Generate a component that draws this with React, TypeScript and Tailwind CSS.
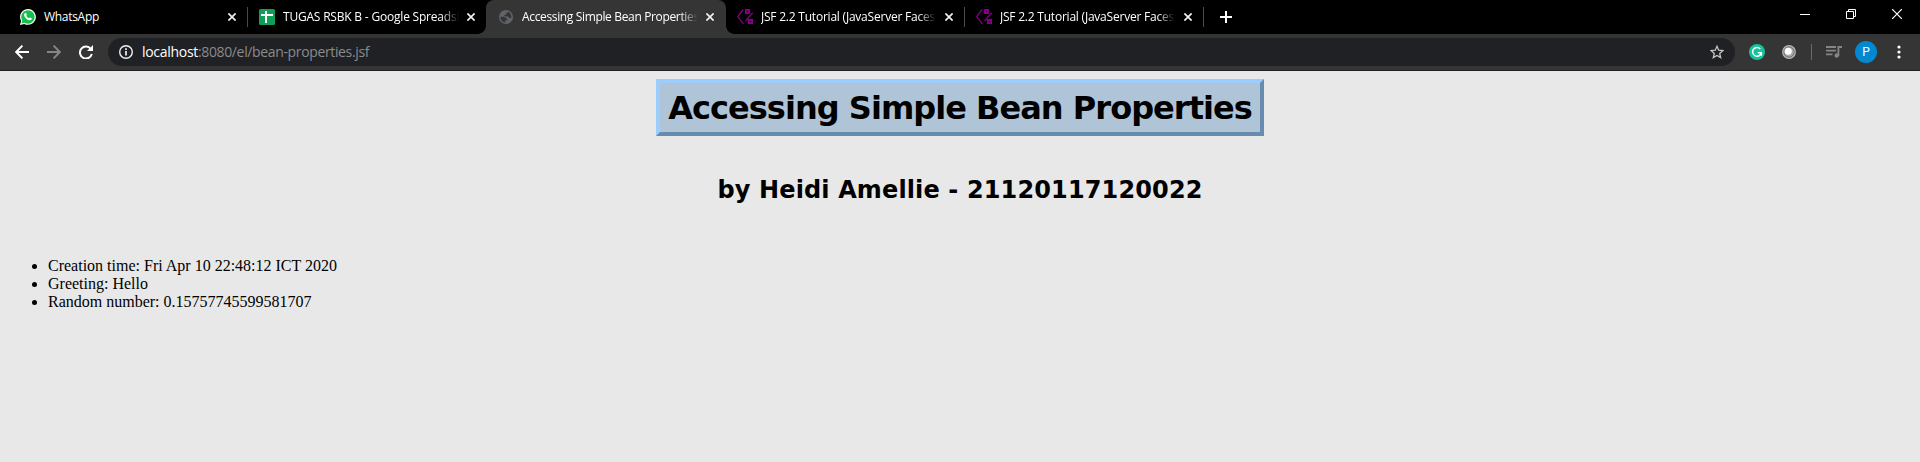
import React from "react";

const Close = ({ className = "" }: { className?: string }) => (
  <svg className={"h-2 w-2 shrink-0 " + className} viewBox="0 0 8 8" stroke="#f1f1f1" strokeWidth="1.7">
    <path d="M.4.4l7.2 7.2M7.6.4L.4 7.6" />
  </svg>
);

const WhatsApp = () => (
  <svg className="h-4 w-4 shrink-0" viewBox="0 0 16 16">
    <path d="M0 16l1.1-4.1A7.9 7.9 0 1 1 4.200 14.9z" fill="#fff" />
    <path d="M1.500 14.500l.8-2.900A6.700 6.700 0 1 1 4.500 13.700z" fill="#12c04a" />
    <path d="M5.300 4.100c.5-.2.8 0 1 .5l.5 1.100c.1.300-.2.700-.6 1.100.6 1.200 1.500 2 2.800 2.500.5-.6.8-1 1.100-.8l1.500.8c.4.200.2.900-.1 1.300-.8.900-2 .9-3.200.4C6.400 10.200 5 8.800 4.300 7c-.5-1.200-.1-2.300 1-2.900z" fill="#fff" />
  </svg>
);

const Sheets = () => (
  <svg className="h-4 w-4 shrink-0" viewBox="0 0 16 16">
    <rect width="16" height="16" rx="1.500" fill="#0f9d58" />
    <path d="M2 5h12v2H8v7H6V7H2zM6 2h2v3H6z" fill="#fff" />
  </svg>
);

const Globe = () => (
  <svg className="h-3.5 w-3.5 shrink-0" viewBox="0 0 14 14">
    <circle cx="7" cy="7" r="7" fill="#5f6368" />
    <path d="M1.500 6.800h3.300c1.400 0 2.100.8 2.100 1.800h1.300v1.600H6.400v2.200C3.500 12.300 1.400 9.800 1.500 6.800zM8.800 1.700c0 1.300-.7 1.700-1.900 1.700v1.500H5.300c.1 1.100.9 1.500 2 1.500h2.300c0 1.500.8 1.700 2.700 1.500.4-2.700-1-5.300-3.500-6.200z" fill="#353535" />
  </svg>
);

const Jsf = () => (
  <svg className="h-4 w-4 shrink-0" viewBox="0 0 16 16" fill="none" stroke="#850085">
    <path d="M6.300.3L.8 7.600l5.500 7.200M15.800 3.800l-7.200 8" strokeWidth="1.300" />
    <path d="M8.900.9h3.200v3.200H8.900zM11.900 10.900h3.200v3.200h-3.200z" strokeWidth="2" />
  </svg>
);

const Title = ({ children, width }: { children: React.ReactNode; width: string }) => (
  <span className={"shrink-0 overflow-hidden whitespace-nowrap text-xs leading-4 text-white [mask-image:linear-gradient(to_right,#000_calc(100%-18px),transparent)] " + width}>
    {children}
  </span>
);

export default function App() {
  return (
    <div className="flex h-[462px] w-[1920px] flex-col overflow-hidden bg-[#e8e8e8] font-['Open_Sans','Noto_Sans',sans-serif]">
      <header className="flex h-[34px] shrink-0 bg-black">
        <div className="flex w-[247px] items-center pl-5">
          <WhatsApp />
          <span className="ml-2 w-[184px] text-xs leading-4 tracking-[-0.3px] text-white">WhatsApp</span>
          <Close />
        </div>
        <div className="my-[7px] w-px bg-[#48484a]" />
        <div className="flex w-[238px] items-center pl-[11px]">
          <Sheets />
          <div className="ml-2 flex tracking-[-0.2px]"><Title width="w-[176px]">TUGAS RSBK B - Google Spreadsh</Title></div>
          <Close className="ml-2" />
        </div>
        <div className="relative flex w-[240px] items-center rounded-t-[8px] bg-[#353535] pl-[13px]">
          <i className="absolute bottom-0 -left-2 h-2 w-2 bg-[radial-gradient(circle_at_0_0,#000_7.5px,#353535_8px)]" />
          <i className="absolute -right-2 bottom-0 h-2 w-2 bg-[radial-gradient(circle_at_100%_0,#000_7.5px,#353535_8px)]" />
          <Globe />
          <div className="ml-[9px] flex tracking-[-0.35px]"><Title width="w-[176px]">Accessing Simple Bean Properties</Title></div>
          <Close className="ml-2" />
        </div>
        <div className="flex w-[238px] items-center pl-[11px]">
          <Jsf />
          <div className="ml-2 flex tracking-[-0.22px]"><Title width="w-[175px]">JSF 2.2 Tutorial (JavaServer Faces</Title></div>
          <Close className="ml-[9px]" />
        </div>
        <div className="my-[7px] w-px bg-[#48484a]" />
        <div className="flex w-[238px] items-center pl-[11px]">
          <Jsf />
          <div className="ml-2 flex tracking-[-0.22px]"><Title width="w-[175px]">JSF 2.2 Tutorial (JavaServer Faces</Title></div>
          <Close className="ml-[9px]" />
        </div>
        <div className="my-[7px] w-px bg-[#48484a]" />
        <svg className="mt-[11px] ml-4 h-3 w-3" viewBox="0 0 12 12" stroke="#fff" strokeWidth="2"><path d="M6 0v12M0 6h12" /></svg>
        <div className="mt-[9px] mr-[18px] ml-auto flex h-[10px] gap-9 text-white">
          <svg className="h-[10px] w-[10px]" viewBox="0 0 10 10" stroke="currentColor"><path d="M0 5.500h10" /></svg>
          <svg className="h-[10px] w-[10px]" viewBox="0 0 10 10" fill="none" stroke="currentColor"><path d="M.5 2.500h7v7h-7zM2.500 2.500v-2h7v7h-2" /></svg>
          <svg className="h-[10px] w-[10px]" viewBox="0 0 10 10" stroke="currentColor" strokeWidth="1.200"><path d="M0 0l10 10M10 0L0 10" /></svg>
        </div>
      </header>

      <nav className="flex h-[37px] shrink-0 items-center border-b border-[#241f24] bg-[#353535] pl-[15px]">
        <svg className="h-[14px] w-[14px]" viewBox="0 0 14 14" fill="none" stroke="#fff" strokeWidth="1.900"><path d="M14 7H1.400M7.400.6L1.200 7l6.200 6.400" /></svg>
        <svg className="ml-[18px] h-[14px] w-[14px]" viewBox="0 0 14 14" fill="none" stroke="#868686" strokeWidth="1.900"><path d="M0 7h12.600M6.600.6L12.800 7l-6.200 6.400" /></svg>
        <svg className="ml-[18px] h-[14px] w-[14px]" viewBox="0 0 14 14"><path d="M11.800 4A6 6 0 1 0 12.800 9" fill="none" stroke="#fff" strokeWidth="2" /><path d="M14 0v6H8z" fill="#fff" /></svg>
        <div className="ml-[15px] flex h-7 w-[1627px] items-center rounded-full bg-[#202124] pl-[11px]">
          <svg className="h-[14px] w-[14px]" viewBox="0 0 14 14" fill="none" stroke="#f1f1f1" strokeWidth="1.400"><circle cx="7" cy="7" r="6.300" /><path d="M7 6v4.600M7 3.300v1.600" strokeWidth="1.700" /></svg>
          <span className="ml-[9px] text-[14px] leading-5 whitespace-nowrap text-[#8a8b8d]"><span className="tracking-[-0.3px] text-white">localhost</span><span className="tracking-[-0.36px]">:8080/el/bean-properties.jsf</span></span>
          <svg className="mr-[11px] ml-auto h-[14px] w-[14px]" viewBox="0 0 14 14" fill="none" stroke="#c4c4c4" strokeWidth="1.300"><path d="M7 1.300l1.700 3.900 4.200.4-3.200 2.800 1 4.200L7 10.400l-3.700 2.200 1-4.200L1.100 5.600l4.200-.4z" /></svg>
        </div>
        <svg className="ml-[14px] h-4 w-4" viewBox="0 0 16 16" fill="none"><circle cx="8" cy="8" r="8" fill="#15c39a" /><path d="M11.300 4.900A4.400 4.400 0 1 0 12.300 8.700H8.800M12.300 8.700v3" stroke="#fff" strokeWidth="1.500" /></svg>
        <svg className="ml-[17px] h-[14px] w-[14px]" viewBox="0 0 14 14"><circle cx="7" cy="7" r="6.300" fill="#777" stroke="#b9b9b9" strokeWidth="1.200" /><circle cx="7" cy="7" r="4.600" fill="#aaa" /><circle cx="6.200" cy="6.200" r="3.500" fill="#fff" /></svg>
        <div className="ml-[15px] h-4 w-px bg-[#6b6b6b]" />
        <svg className="ml-[14px] h-3 w-4" viewBox="0 0 16 12" fill="none" stroke="#858585" strokeWidth="1.800"><path d="M0 1h10M0 4.700h10M0 8.400h6.500M12.400 10V1H16" /><circle cx="10.700" cy="9.500" r="2.200" fill="#858585" stroke="none" /></svg>
        <div className="ml-[13px] flex h-[22px] w-[22px] items-center justify-center rounded-full bg-[#0288d1] font-[Roboto] text-xs text-white">P</div>
        <svg className="ml-5 h-[14px] w-1" viewBox="0 0 4 14" fill="#fff"><circle cx="2" cy="2" r="1.600" /><circle cx="2" cy="7" r="1.600" /><circle cx="2" cy="12" r="1.600" /></svg>
      </nav>

      <main className="flex flex-col items-center text-black">
        <h1 className="mt-2 flex h-[57px] w-[608px] items-center justify-center border-4 border-t-[#9bcdfd] border-r-[#688caf] border-b-[#688caf] border-l-[#9bcdfd] bg-[#b0c4d8] font-['DejaVu_Sans',sans-serif] text-[32px] leading-none font-bold tracking-[-0.97px] whitespace-nowrap">
          <span>Accessing Simple Bean Properties</span>
        </h1>
        <h2 className="mt-10 font-['DejaVu_Sans',sans-serif] text-[24px] leading-[29px] font-bold tracking-[0.13px] whitespace-nowrap">
          <span>by Heidi Amellie - 21120117120022</span>
        </h2>
        <ul className="mt-[52px] list-disc self-start pl-12 font-['Liberation_Serif',serif] text-base leading-[18px]">
          <li>Creation time: Fri Apr 10 22:48:12 ICT 2020</li>
          <li>Greeting: Hello</li>
          <li>Random number: 0.15757745599581707</li>
        </ul>
      </main>
    </div>
  );
}
